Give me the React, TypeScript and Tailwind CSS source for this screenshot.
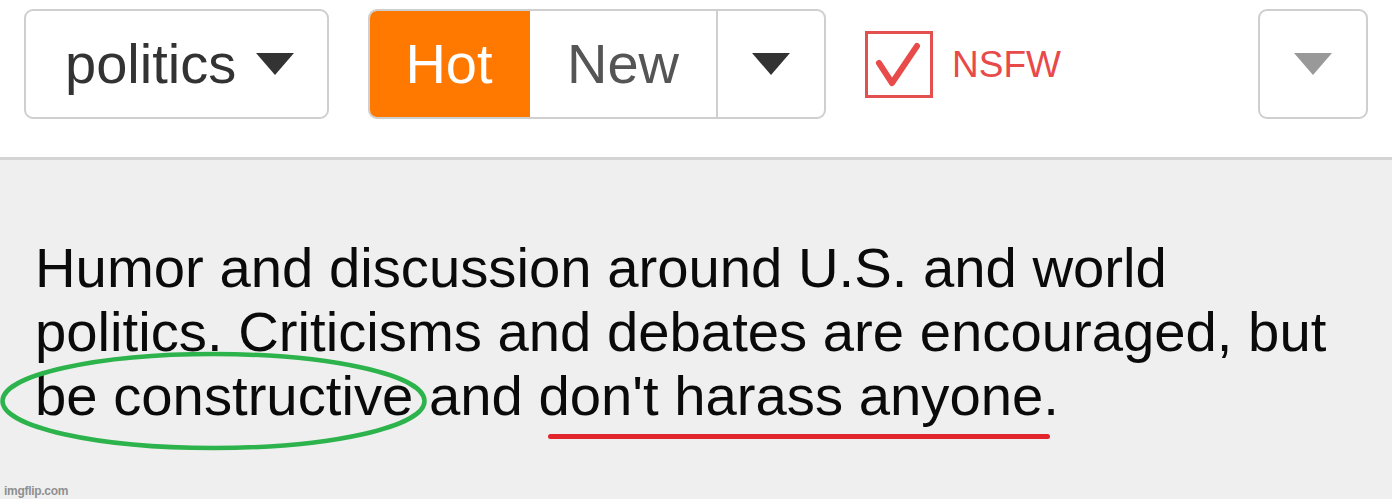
import { Fragment } from "react";

const font = { fontFamily: '"Liberation Sans", Arial, sans-serif' };

function Caret({ color }: { color: string }) {
  return (
    <svg width="38" height="22" viewBox="0 0 38 22" className="shrink-0">
      <polygon points="0,0 38,0 19,22" fill={color} />
    </svg>
  );
}

const lines = [
  "Humor and discussion around U.S. and world",
  "politics. Criticisms and debates are encouraged, but",
  "be constructive and don't harass anyone.",
];

export default function App() {
  return (
    <div
      className="relative w-[1392px] h-[499px] overflow-hidden bg-[#efefef]"
      style={font}
    >
      {/* Top bar */}
      <header className="flex items-start h-[160px] bg-white border-b-[3px] border-[#d4d4d4] pt-[9px] pl-[24px] pr-[24px]">
        <div className="flex items-center w-[305px] h-[110px] rounded-[9px] border-2 border-[#cfcfcf] pl-[39px] gap-[20px]">
          <span className="text-[56px] leading-none text-[#333]">politics</span>
          <Caret color="#333" />
        </div>

        <div className="flex ml-[39px] w-[458px] h-[110px] rounded-[9px] border-2 border-[#cfcfcf] overflow-hidden">
          <div className="flex items-center justify-center w-[162px] -my-[2px] -ml-[2px] bg-[#ff7800] rounded-l-[9px] text-[56px] leading-none text-white">
            Hot
          </div>
          <div className="flex items-center justify-center w-[186px] text-[56px] leading-none text-[#555]">
            New
          </div>
          <div className="flex flex-1 items-center justify-center border-l-2 border-[#cfcfcf]">
            <Caret color="#333" />
          </div>
        </div>

        <div className="flex items-center ml-[39px] mt-[22px] gap-[19px]">
          <div className="w-[68px] h-[67px] border-[3px] border-[#e45050]">
            <svg width="62" height="61" viewBox="0 0 62 61">
              <polyline
                points="11,29 24,49 49,12"
                fill="none"
                stroke="#e94a4a"
                strokeWidth="6"
                strokeLinecap="round"
                strokeLinejoin="round"
              />
            </svg>
          </div>
          <span className="text-[37px] leading-none text-[#e84a4a]">NSFW</span>
        </div>

        <div className="flex items-center justify-center ml-auto w-[110px] h-[110px] rounded-[9px] border-2 border-[#cfcfcf]">
          <Caret color="#999" />
        </div>
      </header>

      {/* Description */}
      <p className="pl-[35px] pt-[76px] text-[56.25px] leading-[64px] text-[#0a0a0a] whitespace-nowrap">
        {lines.map((line, i) => (
          <Fragment key={i}>
            {line}
            {i < lines.length - 1 && <br />}
          </Fragment>
        ))}
      </p>

      {/* Annotations */}
      <svg
        className="absolute left-0 top-[350px]"
        width="432"
        height="104"
        viewBox="0 0 432 104"
      >
        <ellipse
          cx="213.5"
          cy="51"
          rx="211"
          ry="47"
          fill="none"
          stroke="#2db34b"
          strokeWidth="4.5"
        />
      </svg>
      <div className="absolute left-[548px] top-[434px] w-[502px] h-[5px] rounded-full bg-[#e2242d]" />

      <span className="absolute left-[4px] top-[482px] text-[12px] font-bold text-[#8f8f8f] tracking-tight">
        imgflip.com
      </span>
    </div>
  );
}
